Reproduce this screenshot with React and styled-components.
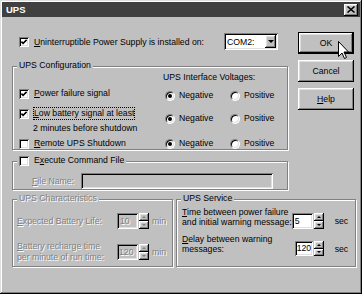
import React from 'react'
import styled, { createGlobalStyle, css } from 'styled-components'

const GlobalStyle = createGlobalStyle`
  html, body { margin: 0; padding: 0; background: #c0c0c0; }
  body {
    font-family: "Liberation Sans", Arial, sans-serif;
    font-size: 8.7px;
    color: #000;
  }
`

const raised = css`
  box-shadow: inset -1px -1px #000, inset 1px 1px #fff,
    inset -2px -2px #808080, inset 2px 2px #dfdfdf;
`

const sunken = css`
  box-shadow: inset 1px 1px #808080, inset -1px -1px #fff,
    inset 2px 2px #000, inset -2px -2px #dfdfdf;
`

const greyed = css`
  color: #808080;
  text-shadow: 1px 1px 0 #fff;
`

const Window = styled.div`
  position: relative;
  width: 362px;
  height: 294px;
  box-sizing: border-box;
  padding: 2px;
  background: #c0c0c0;
  box-shadow: inset -1px -1px #000, inset 1px 1px #dfdfdf,
    inset -2px -2px #808080, inset 2px 2px #fff;
  display: flex;
  flex-direction: column;
  overflow: hidden;
  white-space: nowrap;
`

const TitleBar = styled.div`
  height: 15px;
  background: #404040;
  display: flex;
  align-items: center;
  justify-content: space-between;
  padding: 0 2px 0 4px;
`

const TitleText = styled.span`
  color: #fff;
  font-weight: bold;
  font-size: 9.5px;
`

const CloseButton = styled.div`
  width: 14px;
  height: 12px;
  box-sizing: border-box;
  background: #c0c0c0;
  ${raised}
  display: flex;
  align-items: center;
  justify-content: center;
`

const Body = styled.div`
  display: flex;
  flex-direction: column;
  padding: 0 6px 0 10px;
`

const Top = styled.div`
  display: flex;
  gap: 10px;
`

const Main = styled.div`
  width: 276px;
  display: flex;
  flex-direction: column;
`

const ButtonColumn = styled.div`
  width: 56px;
  display: flex;
  flex-direction: column;
  gap: 6px;
  padding-top: 15px;
`

const Button = styled.div`
  height: 22px;
  box-sizing: border-box;
  display: flex;
  align-items: center;
  justify-content: center;
  background: #c0c0c0;
  ${raised}
  ${p => p.$default && css`border: 1px solid #000;`}
`

const Key = styled.span`
  text-decoration: underline;
`

const InstallRow = styled.div`
  display: flex;
  align-items: center;
  height: 17px;
  margin-top: 16px;
  padding-left: 7px;
  gap: 5px;
`

const Combo = styled.div`
  width: 54px;
  height: 17px;
  box-sizing: border-box;
  margin-left: auto;
  margin-right: 10px;
  padding: 2px;
  background: #fff;
  ${sunken}
  display: flex;
  align-items: center;
`

const ComboText = styled.span`
  flex: 1;
  padding-left: 1px;
`

const ComboButton = styled.div`
  width: 11px;
  height: 13px;
  box-sizing: border-box;
  background: #c0c0c0;
  ${raised}
  display: flex;
  align-items: center;
  justify-content: center;
`

const Triangle = styled.span`
  width: 0;
  height: 0;
  border-left: ${p => p.$size}px solid transparent;
  border-right: ${p => p.$size}px solid transparent;
  ${p => (p.$up ? 'border-bottom' : 'border-top')}: ${p => Math.ceil(p.$size * 0.7)}px solid
    ${p => (p.$disabled ? '#808080' : '#000')};
`

const Group = styled.div`
  position: relative;
  box-sizing: border-box;
  height: ${p => p.$h}px;
  width: ${p => (p.$w ? `${p.$w}px` : 'auto')};
  flex: ${p => (p.$w ? 'none' : '1')};
  margin-top: ${p => p.$mt || 0}px;
  border: 1px solid #808080;
  box-shadow: inset 1px 1px #fff, 1px 1px #fff;
`

const Legend = styled.div`
  position: absolute;
  top: -7px;
  left: 4px;
  padding: 0 2px;
  height: 11px;
  line-height: 11px;
  background: #c0c0c0;
  display: flex;
  align-items: center;
  gap: 5px;
  ${p => p.$disabled && greyed}
`

const ConfigBody = styled.div`
  display: grid;
  grid-template-columns: 144px 1fr;
  padding-left: 6px;
`

const Column = styled.div`
  display: flex;
  flex-direction: column;
  padding-top: ${p => p.$pt}px;
`

const CheckRow = styled.div`
  display: flex;
  align-items: center;
  gap: 5px;
  height: 11px;
  line-height: 11px;
  margin-top: ${p => p.$mt || 0}px;
`

const TextLine = styled.div`
  height: 11px;
  line-height: 11px;
  margin-top: ${p => p.$mt || 0}px;
  margin-left: ${p => p.$ml || 0}px;
  ${p => p.$disabled && greyed}
`

const Focus = styled.span`
  outline: 1px dotted #000;
`

const Box = styled.span`
  width: 10px;
  height: 10px;
  flex: none;
  background: #fff;
  ${sunken}
  svg { display: block; }
`

const RadioRow = styled.div`
  display: grid;
  grid-template-columns: 65px auto;
  padding-left: 2px;
  height: 11px;
  margin-top: ${p => p.$mt}px;
`

const RadioOption = styled.div`
  display: flex;
  align-items: center;
  gap: 4px;
  line-height: 11px;
`

const RadioDot = styled.span`
  width: 10px;
  height: 10px;
  box-sizing: border-box;
  flex: none;
  border-radius: 50%;
  background: #fff;
  border: 1px solid;
  border-color: #808080 #fff #fff #808080;
  box-shadow: inset 1px 1px #000, inset -1px -1px #dfdfdf;
  display: flex;
  align-items: center;
  justify-content: center;
  &::after {
    content: '';
    width: 4px;
    height: 4px;
    border-radius: 50%;
    background: ${p => (p.$checked ? '#000' : 'transparent')};
  }
`

const FileRow = styled.div`
  display: flex;
  align-items: center;
  height: 16px;
  padding: 11px 14px 0 19px;
`

const TextField = styled.div`
  width: 192px;
  height: 16px;
  margin-left: auto;
  background: #c0c0c0;
  ${sunken}
`

const Bottom = styled.div`
  display: flex;
  gap: 3px;
`

const FieldBody = styled.div`
  display: flex;
  flex-direction: column;
  padding: ${p => p.$pt}px 0 0 ${p => p.$pl}px;
`

const FieldRow = styled.div`
  display: flex;
  align-items: ${p => (p.$top ? 'flex-start' : 'center')};
  margin-top: ${p => p.$mt || 0}px;
`

const FieldLabel = styled.div`
  width: ${p => (p.$w ? `${p.$w}px` : 'auto')};
  flex: ${p => (p.$w ? 'none' : '1')};
  line-height: ${p => p.$lh || 10}px;
  ${p => p.$disabled && greyed}
`

const SpinWrap = styled.div`
  display: flex;
  gap: 1px;
  margin-top: ${p => p.$mt || 0}px;
`

const SpinField = styled.div`
  width: ${p => p.$w}px;
  height: ${p => p.$h}px;
  box-sizing: border-box;
  padding-left: ${p => p.$pad}px;
  line-height: ${p => p.$h}px;
  overflow: hidden;
  background: ${p => (p.$disabled ? '#c0c0c0' : '#fff')};
  ${sunken}
  ${p => p.$disabled && greyed}
`

const SpinButtons = styled.div`
  width: 10px;
  height: ${p => p.$h}px;
  display: flex;
  flex-direction: column;
`

const SpinButton = styled.div`
  flex: 1;
  background: #c0c0c0;
  ${raised}
  display: flex;
  align-items: center;
  justify-content: center;
`

const Unit = styled.div`
  width: ${p => p.$w}px;
  margin-left: ${p => p.$ml}px;
  margin-top: ${p => p.$mt || 0}px;
  line-height: 16px;
  ${p => p.$disabled && greyed}
`

const Cursor = styled.svg`
  position: absolute;
  left: 338px;
  top: 41px;
`

const Check = ({ checked }) => (
  <Box>
    {checked && (
      <svg width="10" height="10" viewBox="0 0 10 10">
        <path d="M2.4 4.6 L4.1 6.4 L7.6 2.9" fill="none" stroke="#000" strokeWidth="1.6" />
      </svg>
    )}
  </Box>
)

const Radios = ({ mt }) => (
  <RadioRow $mt={mt}>
    <RadioOption><RadioDot $checked />Negative</RadioOption>
    <RadioOption><RadioDot />Positive</RadioOption>
  </RadioRow>
)

const Spin = ({ value, width, height, disabled, mt, pad = 3 }) => (
  <SpinWrap $mt={mt}>
    <SpinField $w={width} $h={height} $pad={pad} $disabled={disabled}>{value}</SpinField>
    <SpinButtons $h={height}>
      <SpinButton><Triangle $up $size={2.5} $disabled={disabled} /></SpinButton>
      <SpinButton><Triangle $size={2.5} $disabled={disabled} /></SpinButton>
    </SpinButtons>
  </SpinWrap>
)

export default function App () {
  return (
    <>
      <GlobalStyle />
      <Window>
        <TitleBar>
          <TitleText>UPS</TitleText>
          <CloseButton>
            <svg width="8" height="7" viewBox="0 0 8 7">
              <path d="M0.5 0.5 L7.5 6.5 M7.5 0.5 L0.5 6.5" stroke="#000" strokeWidth="1.5" />
            </svg>
          </CloseButton>
        </TitleBar>
        <Body>
          <Top>
            <Main>
              <InstallRow>
                <Check checked />
                <span><Key>U</Key>ninterruptible Power Supply is installed on:</span>
                <Combo>
                  <ComboText>COM2:</ComboText>
                  <ComboButton><Triangle $size={3} /></ComboButton>
                </Combo>
              </InstallRow>

              <Group $h={94} $mt={16}>
                <Legend>UPS Configuration</Legend>
                <ConfigBody>
                  <Column $pt={21}>
                    <CheckRow>
                      <Check checked />
                      <span><Key>P</Key>ower failure signal</span>
                    </CheckRow>
                    <CheckRow $mt={9}>
                      <Check checked />
                      <Focus><Key>L</Key>ow battery signal at least</Focus>
                    </CheckRow>
                    <TextLine $mt={4} $ml={14}>2 minutes before shutdown</TextLine>
                    <CheckRow $mt={4}>
                      <Check />
                      <span><Key>R</Key>emote UPS Shutdown</span>
                    </CheckRow>
                  </Column>
                  <Column $pt={5}>
                    <TextLine>UPS Interface Voltages:</TextLine>
                    <Radios mt={7} />
                    <Radios mt={12} />
                    <Radios mt={14} />
                  </Column>
                </ConfigBody>
              </Group>

              <Group $h={35} $mt={11}>
                <Legend>
                  <Check />
                  <span>E<Key>x</Key>ecute Command File</span>
                </Legend>
                <FileRow>
                  <TextLine $disabled><Key>F</Key>ile Name:</TextLine>
                  <TextField />
                </FileRow>
              </Group>
            </Main>

            <ButtonColumn>
              <Button $default>OK</Button>
              <Button>Cancel</Button>
              <Button><Key>H</Key>elp</Button>
            </ButtonColumn>
          </Top>

          <Bottom>
            <Group $h={68} $w={161} $mt={9}>
              <Legend $disabled>UPS Characteristics</Legend>
              <FieldBody $pt={13} $pl={4}>
                <FieldRow>
                  <FieldLabel $w={100} $disabled><Key>E</Key>xpected Battery Life:</FieldLabel>
                  <Spin value="10" width={21} height={16} disabled />
                  <Unit $w={21} $ml={3} $disabled>min</Unit>
                </FieldRow>
                <FieldRow $mt={12}>
                  <FieldLabel $w={100} $lh={11} $disabled>
                    <Key>B</Key>attery recharge time<br />per minute of run time:
                  </FieldLabel>
                  <Spin value="120" width={21} height={16} pad={2} disabled />
                  <Unit $w={21} $ml={3} $disabled>min</Unit>
                </FieldRow>
              </FieldBody>
            </Group>

            <Group $h={68} $mt={9}>
              <Legend>UPS Service</Legend>
              <FieldBody $pt={8} $pl={5}>
                <FieldRow $top>
                  <FieldLabel $lh={9.5}>
                    <Key>T</Key>ime between power failure<br />and initial warning message:
                  </FieldLabel>
                  <Spin value="5" width={21} height={16} mt={5} />
                  <Unit $w={20} $ml={11} $mt={5}>sec</Unit>
                </FieldRow>
                <FieldRow $top $mt={6}>
                  <FieldLabel $lh={9.5}>
                    <Key>D</Key>elay between warning<br />messages:
                  </FieldLabel>
                  <Spin value="120" width={18} height={15} pad={2} mt={6} />
                  <Unit $w={20} $ml={11} $mt={5.5}>sec</Unit>
                </FieldRow>
              </FieldBody>
            </Group>
          </Bottom>
        </Body>

        <Cursor width="12" height="19" viewBox="0 0 12 19">
          <path d="M0.5 0.5 V15.5 L4 12 L6.5 17.5 L8.5 16.5 L6 11 H10.5 Z" fill="#fff" stroke="#000" />
        </Cursor>
      </Window>
    </>
  )
}
